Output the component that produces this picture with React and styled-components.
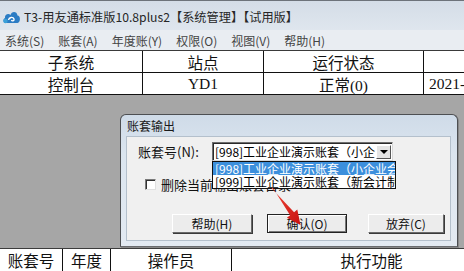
import React from 'react'
import styled, { createGlobalStyle } from 'styled-components'

const GlobalStyle = createGlobalStyle`
  html, body { margin: 0; padding: 0; background: #a6a6a6; }
  body { overflow: hidden; }
`

const CJK = `"Noto Sans CJK SC", "Liberation Sans", sans-serif`
const SERIF = `"Liberation Serif", "Noto Sans CJK SC", serif`

const topCols = [
  { w: 143, head: '子系统', cell: '控制台' },
  { w: 121, head: '站点', cell: 'YD1' },
  { w: 160, head: '运行状态', cell: '正常(0)' },
  { w: 80, head: '', cell: '2021-', left: true },
]

const bottomCols = [
  { w: 63, head: '账套号' },
  { w: 48, head: '年度' },
  { w: 121, head: '操作员' },
  { w: 280, head: '执行功能' },
]

const menus = ['系统(S)', '账套(A)', '年度账(Y)', '权限(O)', '视图(V)', '帮助(H)']

const CloudIcon = () => (
  <svg width="19" height="17" viewBox="0 0 19 17">
    <path d="M4 15 C1 15 0.5 11 3 10 C2.5 6.5 6.5 5 8.5 7 C9.5 3 15 3 15.5 7.5 C18.5 7.5 19 14 15.5 15 Z" fill="#2b7cc4" />
    <path d="M6.5 12 C7 9 11 8.5 12 11 C12.5 13 10 13.5 9.5 12" fill="none" stroke="#fff" strokeWidth="1.4" />
    <circle cx="3.5" cy="13" r="2.2" fill="#3aa0d8" />
  </svg>
)

const RedArrow = () => (
  <ArrowLayer width="464" height="271" viewBox="0 0 464 271">
    <defs>
      <linearGradient id="ar" x1="0" y1="0" x2="1" y2="1">
        <stop offset="0" stopColor="#f04a3a" />
        <stop offset="1" stopColor="#c81010" />
      </linearGradient>
    </defs>
    <polygon
      points="271.6,188.3 294.1,212.2 297.3,209.6 300.5,225 286.9,217.8 290.1,215.2 272.6,187.6"
      fill="url(#ar)"
    />
  </ArrowLayer>
)

export default function App() {
  return (
    <Screen>
      <GlobalStyle />
      <TitleBar>
        <CloudIcon />
        <TitleText>T3-用友通标准版10.8plus2【系统管理】【试用版】</TitleText>
      </TitleBar>
      <MenuBar>
        {menus.map(m => <MenuItem key={m}>{m}</MenuItem>)}
      </MenuBar>

      <Table>
        <Row>
          {topCols.map((c, i) => <Cell key={i} $w={c.w}>{c.head}</Cell>)}
        </Row>
        <Row>
          {topCols.map((c, i) => <Cell key={i} $w={c.w} $left={c.left}>{c.cell}</Cell>)}
        </Row>
      </Table>

      <Desk>
        <Dialog>
          <DialogTitle>账套输出</DialogTitle>
          <Client>
            <FieldRow>
              <FieldLabel>账套号(N):</FieldLabel>
              <Combo>
                <ComboText>[998]工业企业演示账套（小企</ComboText>
                <ComboButton><Triangle /></ComboButton>
              </Combo>
            </FieldRow>
            <CheckRow>
              <CheckBox />
              <CheckLabel>删除当前输出账套目录</CheckLabel>
            </CheckRow>
            <ButtonRow>
              <Button>帮助(H)</Button>
              <Button $default>确认(O)</Button>
              <Button $wide>放弃(C)</Button>
            </ButtonRow>
          </Client>
          <DropList>
            <DropItem $active>[998]工业企业演示账套（小企业会计</DropItem>
            <DropItem>[999]工业企业演示账套（新会计制度</DropItem>
          </DropList>
        </Dialog>
      </Desk>

      <BottomTable>
        {bottomCols.map((c, i) => <Cell key={i} $w={c.w}>{c.head}</Cell>)}
      </BottomTable>

      <RedArrow />
    </Screen>
  )
}

/* ===========================
   Styled Components
=========================== */

const Screen = styled.div`
  position: relative;
  width: 464px;
  height: 271px;
  display: flex;
  flex-direction: column;
  overflow: hidden;
  background: #a6a6a6;
`

const TitleBar = styled.div`
  height: 30px;
  flex-shrink: 0;
  display: flex;
  align-items: center;
  gap: 3px;
  padding-left: 2px;
  padding-top: 2px;
  box-sizing: border-box;
  border-top: 1px solid #6d737a;
  background: linear-gradient(#d4dde7, #dfe6ee);
`

const TitleText = styled.div`
  font-family: ${CJK};
  font-size: 12.2px;
  color: #262626;
  white-space: nowrap;
`

const MenuBar = styled.div`
  height: 20px;
  flex-shrink: 0;
  display: flex;
  align-items: center;
  gap: 14px;
  padding-left: 5px;
  background: #e9edf2;
  border-bottom: 1px solid #3a3a3a;
`

const MenuItem = styled.span`
  font-family: ${CJK};
  font-size: 12px;
  color: #444;
  white-space: nowrap;
`

const Table = styled.div`
  flex-shrink: 0;
  background: #fff;
`

const Row = styled.div`
  display: flex;
  height: 21px;
  border-bottom: 1px solid #111;
`

const BottomTable = styled.div`
  flex-shrink: 0;
  display: flex;
  height: 22px;
  background: #fff;
`

const Cell = styled.div`
  flex: 0 0 ${p => p.$w}px;
  box-sizing: border-box;
  border-right: 1px solid #111;
  display: flex;
  align-items: center;
  justify-content: ${p => (p.$left ? 'flex-start' : 'center')};
  padding-left: ${p => (p.$left ? '5px' : '0')};
  font-family: ${SERIF};
  font-size: 15.5px;
  color: #111;
  white-space: nowrap;
  overflow: hidden;
`

const Desk = styled.div`
  flex: 1;
  min-height: 0;
  padding: 19px 0 0 120px;
  background: #a6a6a6;
  border-bottom: 1px solid #3c3c3c;
`

const Dialog = styled.div`
  position: relative;
  width: 338px;
  height: 133px;
  box-sizing: border-box;
  border: 1px solid #4d4f52;
  border-bottom-color: #6a6c70;
  border-radius: 6px 6px 0 0;
  background: linear-gradient(#cfdbe8, #dbe5ef 30%, #e3eaf2);
  display: flex;
  flex-direction: column;
  box-shadow: 1px 1px 0 #888;
`

const DialogTitle = styled.div`
  height: 21px;
  flex-shrink: 0;
  display: flex;
  align-items: center;
  padding-left: 6px;
  font-family: ${CJK};
  font-size: 12px;
  color: #1a1a1a;
`

const Client = styled.div`
  flex: 1;
  margin: 0 6px 5px 5px;
  background: #f0f0f0;
  border: 1px solid #b4c0cc;
  display: flex;
  flex-direction: column;
  padding: 5px 0 0 11px;
`

const FieldRow = styled.div`
  display: flex;
  align-items: center;
  height: 19px;
`

const FieldLabel = styled.div`
  width: 74px;
  font-family: ${CJK};
  font-size: 13px;
  color: #111;
  white-space: nowrap;
`

const Combo = styled.div`
  width: 181px;
  height: 19px;
  box-sizing: border-box;
  display: flex;
  align-items: center;
  background: #fff;
  border: 1px solid;
  border-color: #6e6e6e #d8d8d8 #d8d8d8 #6e6e6e;
  box-shadow: inset 1px 1px 0 #2a2a2a;
  padding-left: 2px;
  overflow: hidden;
`

const ComboText = styled.div`
  flex: 1;
  font-family: ${CJK};
  font-size: 12px;
  color: #000;
  white-space: nowrap;
  overflow: hidden;
`

const ComboButton = styled.div`
  width: 15px;
  height: 14px;
  margin-right: 1px;
  box-sizing: border-box;
  background: #e4e4e4;
  border: 1px solid;
  border-color: #fff #555 #555 #fff;
  display: flex;
  align-items: center;
  justify-content: center;
`

const Triangle = styled.div`
  width: 0;
  height: 0;
  border-left: 4px solid transparent;
  border-right: 4px solid transparent;
  border-top: 4px solid #000;
`

const CheckRow = styled.div`
  display: flex;
  align-items: center;
  gap: 5px;
  margin-top: 17px;
  padding-left: 7px;
  height: 13px;
`

const CheckBox = styled.div`
  width: 11px;
  height: 11px;
  box-sizing: border-box;
  background: #fff;
  border: 1px solid;
  border-color: #7a7a7a #e0e0e0 #e0e0e0 #7a7a7a;
  box-shadow: inset 1px 1px 0 #333;
`

const CheckLabel = styled.div`
  font-family: ${CJK};
  font-size: 13px;
  color: #111;
  white-space: nowrap;
`

const ButtonRow = styled.div`
  display: flex;
  gap: 15px;
  margin-top: 23px;
  padding-left: 34px;
`

const Button = styled.div`
  width: ${p => (p.$wide ? 76 : 80)}px;
  height: 19px;
  margin-left: ${p => (p.$wide ? '6px' : '0')};
  box-sizing: border-box;
  display: flex;
  align-items: center;
  justify-content: center;
  background: #ececec;
  border: 1px solid;
  border-color: ${p => (p.$default ? '#222' : '#fff #6a6a6a #6a6a6a #fff')};
  box-shadow: ${p => (p.$default ? 'inset 1px 1px 0 #fff, inset -1px -1px 0 #777' : '1px 1px 0 #3a3a3a')};
  font-family: ${CJK};
  font-size: 12px;
  color: #111;
  white-space: nowrap;
`

const DropList = styled.div`
  position: absolute;
  left: 91px;
  top: 46px;
  width: 184px;
  box-sizing: border-box;
  background: #fff;
  border: 1px solid #111;
  overflow: hidden;
`

const DropItem = styled.div`
  height: 13px;
  line-height: 13px;
  padding-left: 2px;
  font-family: ${CJK};
  font-size: 12px;
  white-space: nowrap;
  overflow: hidden;
  color: ${p => (p.$active ? '#fff' : '#000')};
  background: ${p => (p.$active ? '#3c8fdc' : '#fff')};
`

const ArrowLayer = styled.svg`
  position: absolute;
  left: 0;
  top: 0;
  pointer-events: none;
`
